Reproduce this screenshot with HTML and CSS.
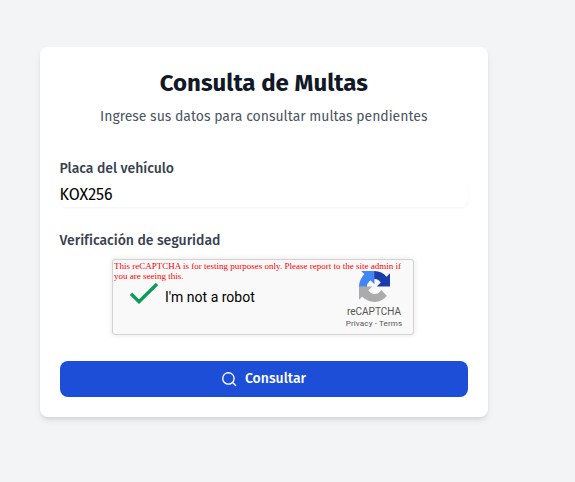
FILE: index.html
```html
<!DOCTYPE html>
<html lang="es">
<head>
<meta charset="utf-8">
<title>Consulta de Multas</title>
<link rel="stylesheet" href="styles.css">
</head>
<body>
<main class="card">
  <header class="card-header">
    <h1 class="title">Consulta de Multas</h1>
    <p class="subtitle">Ingrese sus datos para consultar multas pendientes</p>
  </header>
  <form class="form">
    <label class="label" for="placa">Placa del vehículo</label>
    <div class="field"><input class="input" id="placa" type="text" value="KOX256"></div>
    <div class="label label-security">Verificación de seguridad</div>
    <div class="captcha">
      <p class="captcha-warning">This reCAPTCHA is for testing purposes only. Please report to the site admin if you are seeing this.</p>
      <div class="captcha-body">
        <svg class="check" viewBox="0 0 30 24"><path d="M2 11.8 10 19.6 28 2" fill="none" stroke="#0b9d58" stroke-width="3.4"/></svg>
        <span class="captcha-label">I'm not a robot</span>
        <div class="brand">
          <svg class="brand-logo" viewBox="0 0 64 64">
            <path fill="#1c3aa9" d="M64 31.955l-.033-1.37V4.687l-7.16 7.16C50.948 4.674 42.033.093 32.05.093c-10.4 0-19.622 4.96-25.458 12.64l11.736 11.86a15.55 15.55 0 0 1 4.754-5.334c2.05-1.6 4.952-2.906 8.968-2.906.485 0 .86.057 1.135.163 4.976.393 9.288 3.14 11.828 7.124l-8.307 8.307L64 31.953"/>
            <path fill="#4285f4" d="M31.862.094l-1.37.033H4.594l7.16 7.16C4.58 13.147 0 22.06 0 32.046c0 10.4 4.96 19.622 12.64 25.458L24.5 45.768a15.55 15.55 0 0 1-5.334-4.754c-1.6-2.05-2.906-4.952-2.906-8.968 0-.485.057-.86.163-1.135.393-4.976 3.14-9.288 7.124-11.828l8.307 8.307L31.86.095"/>
            <path fill="#ababab" d="M.001 32.045l.033 1.37v25.898l7.16-7.16c5.86 7.173 14.774 11.754 24.76 11.754 10.4 0 19.622-4.96 25.458-12.64l-11.736-11.86a15.55 15.55 0 0 1-4.754 5.334c-2.05 1.6-4.952 2.906-8.968 2.906-.485 0-.86-.057-1.135-.163-4.976-.393-9.288-3.14-11.828-7.124l8.307-8.307L0 32.047"/>
          </svg>
          <span class="brand-name">reCAPTCHA</span>
          <span class="brand-links">Privacy - Terms</span>
        </div>
      </div>
    </div>
    <button class="submit" type="button">
      <svg class="search" viewBox="0 0 16 16"><circle cx="7.4" cy="7.4" r="5.7"/><path d="m11.6 11.6 3 3"/></svg>
      <span>Consultar</span>
    </button>
  </form>
</main>
</body>
</html>
```
FILE: styles.css
```css
* { box-sizing: border-box; }
body {
  margin: 0;
  min-height: 482px;
  padding: 47px 0 0 40px;
  background: #f3f4f6;
  font-family: "Fira Sans", "Noto Sans", sans-serif;
  overflow: hidden;
}
.card {
  width: 448px;
  height: 370px;
  padding: 20px 20px 20px 19.5px;
  border-radius: 8px;
  background: #fff;
  box-shadow: 0 4px 6px -1px rgba(0, 0, 0, .1), 0 2px 4px -2px rgba(0, 0, 0, .1);
}
.card-header { text-align: center; }
.title, .subtitle { margin: 0; white-space: nowrap; }
.title { color: #111827; font-size: 24px; font-weight: 700; line-height: 32px; }
.subtitle { margin-top: 7px; color: #4b5563; font-size: 14px; line-height: 22px; letter-spacing: -.01px; }
.form { margin: 0; padding-top: 31px; }
.label {
  display: block;
  height: 20px;
  color: #374151;
  font-size: 14px;
  font-weight: 500;
  line-height: 20px;
  letter-spacing: -.02px;
}
.field {
  width: 408px;
  height: 26px;
  margin: 2px 0 0 .5px;
  border-radius: 8px;
  box-shadow: 0 1px 2px rgba(0, 0, 0, .05);
}
.input {
  display: block;
  width: 100%;
  height: 26px;
  margin-left: -.5px;
  padding: 0;
  border: 0;
  outline: 0;
  background: transparent;
  color: #000;
  font: 400 16px/24px "Fira Sans", "Noto Sans", sans-serif;
}
.label-security { margin-top: 24px; }
.captcha {
  width: 302px;
  height: 76px;
  margin: 8px 0 0 52.5px;
  border: 1px solid #d3d3d3;
  border-radius: 3px;
  background: #f9f9f9;
  box-shadow: 0 0 4px 1px rgba(0, 0, 0, .08);
}
.captcha-warning {
  height: 11px;
  margin: 0;
  padding: 1px 2px 0 1px;
  color: #f00;
  font: 9px/10px "Liberation Serif", serif;
}
.captcha-body { display: flex; height: 60px; }
.check { flex: none; width: 30px; height: 24px; margin: 11px 0 0 16px; }
.captcha-label { flex: none; margin: 17px 0 0 6px; width: 164px; color: #000; font: 14px/18px Roboto, sans-serif; }
.brand { flex: none; display: flex; flex-direction: column; align-items: center; width: 90px; color: #555; }
.brand-logo { width: 31px; height: 31px; }
.brand-name { margin-top: 3px; font: 10px/13px Roboto, sans-serif; }
.brand-links { margin-top: 1px; font: 8px/10px Roboto, sans-serif; letter-spacing: .15px; }
.submit {
  display: flex;
  align-items: center;
  justify-content: center;
  gap: 8px;
  width: 408px;
  height: 36px;
  margin: 26px 0 0 .5px;
  padding: 0 1px 0 0;
  border: 0;
  border-radius: 8px;
  background: #1d4ed8;
  color: #fff;
  font: 500 14px/20px "Fira Sans", "Noto Sans", sans-serif;
}
.search { width: 16px; height: 16px; fill: none; stroke: #fff; stroke-width: 1.35; stroke-linecap: round; }
```
